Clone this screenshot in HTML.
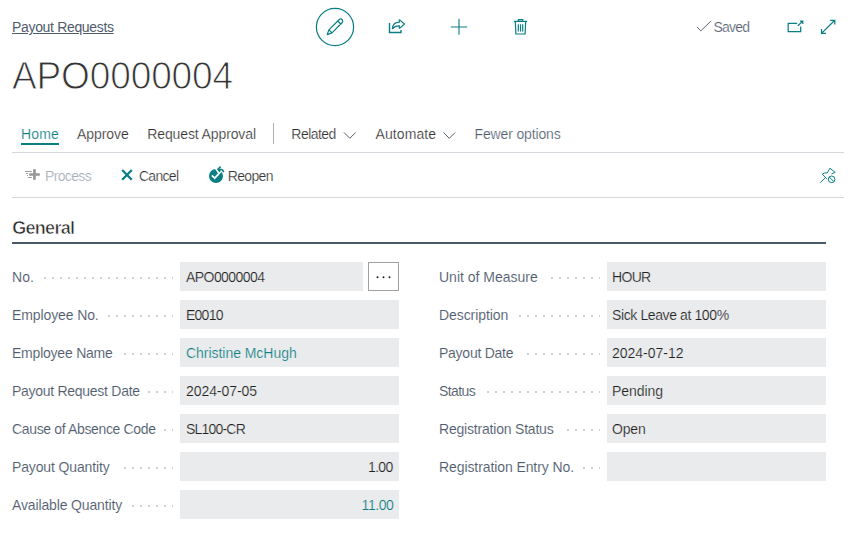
<!DOCTYPE html>
<html><head><meta charset="utf-8">
<style>
html,body{margin:0;padding:0;background:#fff;}
body{width:854px;height:535px;position:relative;overflow:hidden;font-family:"Liberation Sans",sans-serif;font-size:14px;color:#212121;}
.a{position:absolute;white-space:nowrap;line-height:20px;-webkit-text-stroke:0.2px #fff;}
svg{position:absolute;overflow:visible;}
.hl{position:absolute;height:1px;background:#d5d8dc;}
.lbl{position:absolute;height:20px;line-height:20px;color:#505c6d;white-space:nowrap;-webkit-text-stroke:0.1px #fff;}
.dots{position:absolute;height:2px;background-image:linear-gradient(to right,#cdd0d4 2px,transparent 2px);background-size:8px 2px;background-repeat:repeat-x;}
.fld{position:absolute;height:29px;background:#eaebec;line-height:31px;padding:0 6px;box-sizing:border-box;white-space:nowrap;color:#212121;-webkit-text-stroke:0.2px #eaebec;}
</style></head><body>
<div class="a" style="left:12px;top:17px;color:#505c6d;letter-spacing:-0.33px;text-decoration:underline;-webkit-text-stroke:0;">Payout Requests</div>
<div class="a" style="left:12px;top:50.5px;font-size:39px;line-height:50px;color:#333;letter-spacing:-0.16px;transform:scaleX(0.95);transform-origin:0 0;-webkit-text-stroke:1px #fff;">APO0000004</div>
<svg style="left:0;top:0" width="854" height="60" viewBox="0 0 854 60" fill="none" stroke="#0a7e85" stroke-width="1.4">
 <circle cx="335" cy="27" r="18.6" stroke-width="1.25"/>
 <g transform="translate(334.7 27.1) rotate(-45)" stroke-width="1.2" stroke-linejoin="round"><path d="M-10.6 0 L-6 -2.15 H8.3 A2.15 2.15 0 0 1 8.3 2.15 H-6 Z M-6 -2.15 V2.15 M6.5 -2.15 V2.15"/></g>
 <path d="M389.5 23 v9.5 h11.5 v-2.5" stroke-width="1.4"/>
 <path d="M392.3 29 C392.8 24.5 395.5 22.2 399.3 22.2 V19.6 L404.5 24 L399.3 28.6 V25.8 C396.2 25.6 394.2 26.6 392.3 29 Z" stroke-width="1.2" stroke-linejoin="miter" stroke-miterlimit="1.6"/>
 <path d="M450.8 27 h16.3 M459 18.8 v15.9" stroke-width="1.1"/>
 <path d="M513.8 21.4 h13.4 M518.3 21.4 v-1.8 h4.4 v1.8 M515.3 21.4 l0.6 12.6 h9.2 l0.6 -12.6 M518.3 24.2 v7.3 M520.5 24.2 v7.3 M522.7 24.2 v7.3" stroke-width="1.2"/>
 <path d="M697 26.9 l3.8 4 10.1 -9.9" stroke="#505c6d" stroke-width="0.95"/>
 <path d="M797.2 23.3 h-9 v8.3 h12.5 v-5.2 M797.9 25.8 l4.9 -4.7 M800 21.1 h2.8 v2.9" stroke-width="1.25"/>
 <path d="M821.5 33.4 l13.3 -13.1 M830.2 20.3 h4.6 v4.3 M821.5 29.1 v4.3 h4.5" stroke-width="1.25"/>
</svg>
<div class="a" style="left:713.5px;top:17px;color:#505c6d;letter-spacing:-0.8px;">Saved</div>
<div class="a" style="left:21px;top:124.15px;color:#0a7e85;letter-spacing:0.17px;">Home</div>
<div style="position:absolute;left:21px;top:143px;width:38px;height:2px;background:#0a7e85"></div>
<div class="a" style="left:77px;top:124.15px;color:#333;letter-spacing:-0.05px;">Approve</div>
<div class="a" style="left:147.3px;top:124.15px;color:#333;letter-spacing:-0.12px;">Request Approval</div>
<div style="position:absolute;left:273px;top:123px;width:1px;height:21px;background:#a9afb7"></div>
<div class="a" style="left:291.3px;top:124.15px;color:#333;letter-spacing:-0.53px;">Related</div>
<div class="a" style="left:375.5px;top:124.15px;color:#333;letter-spacing:0.09px;">Automate</div>
<div class="a" style="left:474.5px;top:124.15px;color:#505c6d;letter-spacing:-0.14px;">Fewer options</div>
<svg style="left:0;top:0" width="854" height="160" fill="none" stroke="#505c6d" stroke-width="1">
 <path d="M344 132.5 l5.8 5.8 5.8 -5.8"/>
 <path d="M443.5 132.5 l5.8 5.8 5.8 -5.8"/>
</svg>
<div class="hl" style="left:12px;top:152px;width:832px"></div>
<svg style="left:0;top:0" width="854" height="200" fill="none">
 <rect x="33.1" y="169.2" width="2.7" height="10.6" fill="#999"/>
 <rect x="29.2" y="173.2" width="10.6" height="2.6" fill="#999"/>
 <rect x="25" y="171" width="6.8" height="1" fill="#999"/>
 <rect x="26" y="173" width="2" height="1" fill="#999"/>
 <rect x="27" y="175" width="1" height="1" fill="#999"/>
 <rect x="28" y="177" width="3.8" height="1" fill="#999"/>
 <path d="M122.2 170 l9.6 9.8 M131.8 170 l-9.6 9.8" stroke="#0a7e85" stroke-width="2.3"/>
 <circle cx="216" cy="176" r="7" fill="#0a7e85"/>
 <path d="M215 167.5 L218.8 173" stroke="#fff" stroke-width="1.6"/>
 <path d="M211.8 175.3 L214.7 178.2 L221.5 170.8" stroke="#fff" stroke-width="1.7"/>
 <path d="M220.6 166.6 L217.9 169.3 L220.3 171.6" stroke="#0a7e85" stroke-width="1.5" stroke-linejoin="round"/>
 <path d="M218.3 169.3 C221.5 169 223.4 169.8 223.6 172.3" stroke="#0a7e85" stroke-width="1.5"/>
 <path d="M820.3 182.6 l5.2 -5 M822.3 174.1 l2.5 -1.2 h2.5 l2.6 -4.7 5.3 4.2 -3.7 1.5 M822.3 174.1 l4.5 4.8" stroke="#0a7e85" stroke-width="1"/>
 <circle cx="831.6" cy="179.3" r="3.3" stroke="#0a7e85" stroke-width="1"/>
 <path d="M829.3 177 l4.6 4.6" stroke="#0a7e85" stroke-width="1"/>
</svg>
<div class="a" style="left:45px;top:166px;color:#a3acb8;letter-spacing:-0.65px;">Process</div>
<div class="a" style="left:138.9px;top:166px;color:#333;letter-spacing:-0.68px;">Cancel</div>
<div class="a" style="left:227.7px;top:166px;color:#333;letter-spacing:-0.66px;">Reopen</div>
<div class="hl" style="left:12px;top:197px;width:832px"></div>
<div class="a" style="left:12.3px;top:217.7px;font-size:18px;font-weight:bold;color:#262626;letter-spacing:-0.73px;-webkit-text-stroke:0.6px #fff">General</div>
<div style="position:absolute;left:12px;top:242px;width:814px;height:2px;background:#4a586b"></div>
<div class="lbl" style="left:12px;top:267px;letter-spacing:0.05px">No.</div>
<div class="dots" style="left:44px;top:277px;width:129px"></div>
<div class="fld" style="left:180px;top:262px;width:183px;letter-spacing:-0.56px;">APO0000004</div>
<div class="lbl" style="left:12px;top:305px;letter-spacing:-0.11px">Employee No.</div>
<div class="dots" style="left:108px;top:315px;width:65px"></div>
<div class="fld" style="left:180px;top:300px;width:219px;letter-spacing:-0.75px;">E0010</div>
<div class="lbl" style="left:12px;top:343px;letter-spacing:-0.22px">Employee Name</div>
<div class="dots" style="left:124px;top:353px;width:49px"></div>
<div class="fld" style="left:180px;top:338px;width:219px;letter-spacing:-0.04px;color:#0a7e85;">Christine McHugh</div>
<div class="lbl" style="left:12px;top:381px;letter-spacing:-0.28px">Payout Request Date</div>
<div class="dots" style="left:148px;top:391px;width:25px"></div>
<div class="fld" style="left:180px;top:376px;width:219px;letter-spacing:-0.07px;">2024-07-05</div>
<div class="lbl" style="left:12px;top:419px;letter-spacing:-0.35px">Cause of Absence Code</div>
<div class="dots" style="left:164px;top:429px;width:9px"></div>
<div class="fld" style="left:180px;top:414px;width:219px;letter-spacing:-0.8px;">SL100-CR</div>
<div class="lbl" style="left:12px;top:457px;letter-spacing:-0.14px">Payout Quantity</div>
<div class="dots" style="left:124px;top:467px;width:49px"></div>
<div class="fld" style="left:180px;top:452px;width:219px;letter-spacing:-0.7px;text-align:right;padding-right:6.5px;">1.00</div>
<div class="lbl" style="left:12px;top:495px;letter-spacing:-0.14px">Available Quantity</div>
<div class="dots" style="left:132px;top:505px;width:41px"></div>
<div class="fld" style="left:180px;top:490px;width:219px;letter-spacing:-0.42px;text-align:right;padding-right:5.5px;color:#0a7e85;">11.00</div>
<div style="position:absolute;left:368px;top:262px;width:31px;height:29px;box-sizing:border-box;border:1px solid #a0a0a0;background:#fff"></div>
<svg style="left:0;top:0" width="854" height="300"><circle cx="377.5" cy="277.3" r="1" fill="#212121"/><circle cx="383.5" cy="277.3" r="1" fill="#212121"/><circle cx="389.5" cy="277.3" r="1" fill="#212121"/></svg>
<div class="lbl" style="left:439px;top:267px;letter-spacing:-0.01px">Unit of Measure</div>
<div class="dots" style="left:551px;top:277px;width:49px"></div>
<div class="fld" style="left:607px;top:262px;width:219px;letter-spacing:-0.67px;padding-left:5px;">HOUR</div>
<div class="lbl" style="left:439px;top:305px;letter-spacing:-0.08px">Description</div>
<div class="dots" style="left:519px;top:315px;width:81px"></div>
<div class="fld" style="left:607px;top:300px;width:219px;letter-spacing:-0.39px;padding-left:5px;">Sick Leave at 100%</div>
<div class="lbl" style="left:439px;top:343px;letter-spacing:-0.25px">Payout Date</div>
<div class="dots" style="left:527px;top:353px;width:73px"></div>
<div class="fld" style="left:607px;top:338px;width:219px;letter-spacing:-0.01px;padding-left:5px;">2024-07-12</div>
<div class="lbl" style="left:439px;top:381px;letter-spacing:-0.58px">Status</div>
<div class="dots" style="left:487px;top:391px;width:113px"></div>
<div class="fld" style="left:607px;top:376px;width:219px;letter-spacing:-0.05px;padding-left:5px;">Pending</div>
<div class="lbl" style="left:439px;top:419px;letter-spacing:-0.2px">Registration Status</div>
<div class="dots" style="left:567px;top:429px;width:33px"></div>
<div class="fld" style="left:607px;top:414px;width:219px;letter-spacing:-0.17px;padding-left:5px;">Open</div>
<div class="lbl" style="left:439px;top:457px;letter-spacing:-0.09px">Registration Entry No.</div>
<div class="dots" style="left:583px;top:467px;width:17px"></div>
<div class="fld" style="left:607px;top:452px;width:219px;letter-spacing:0px;padding-left:5px;"></div>
</body></html>
